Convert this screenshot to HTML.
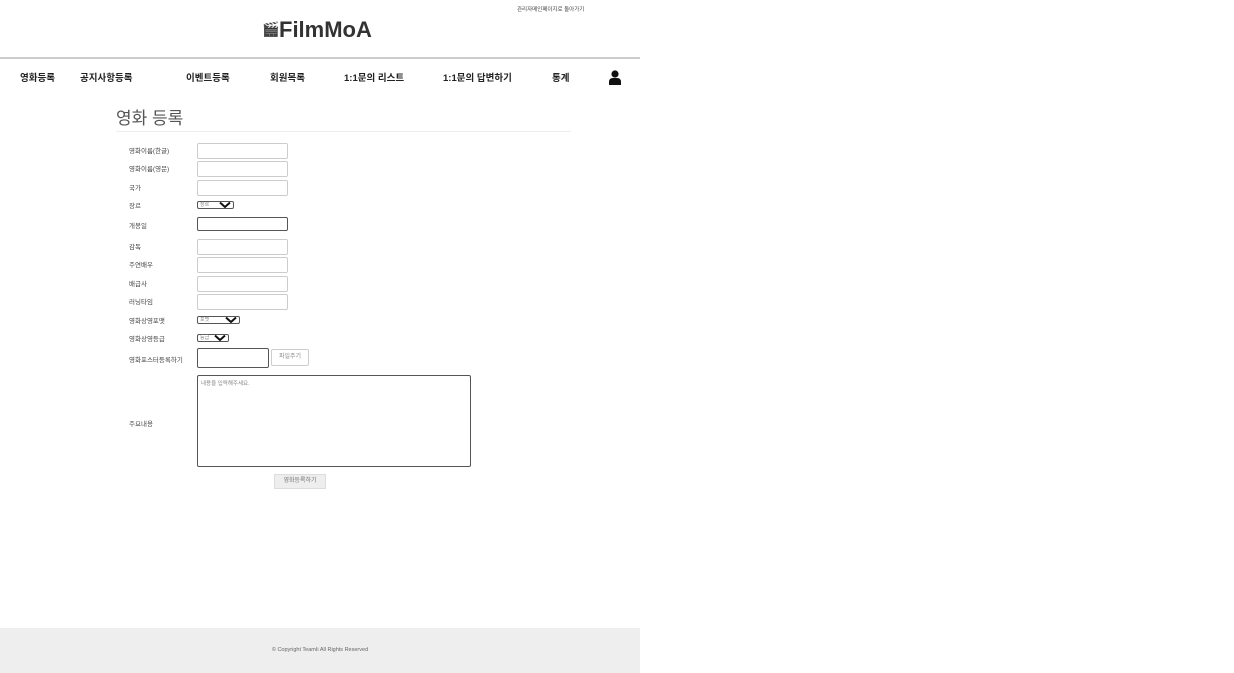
<!DOCTYPE html>
<html><head><meta charset="utf-8"><style>
*{margin:0;padding:0;box-sizing:border-box}
body{width:1234px;height:673px;background:#fff;position:relative;font-family:"Liberation Sans","Noto Sans CJK KR",sans-serif;color:#222;overflow:hidden}
.a{position:absolute}
.lbl{position:absolute;left:129px;font-size:6.5px;color:#444;transform:translateY(-50%)}
.in{position:absolute;left:197px;width:91px;height:16px;border:1px solid #ccc;border-radius:2px;background:#fff}
.sel{position:absolute;left:197px;height:8px;border:1px solid #555;border-radius:2px;font-size:5px;color:#888;padding-left:2px;line-height:6px}
.sel svg{position:absolute;right:2px;top:0}
.nav{position:absolute;top:77px;font-size:9.5px;font-weight:bold;color:#222;transform:translateY(-50%)}
</style></head><body>
<div class="a" style="left:517px;top:5px;font-size:5.5px;color:#444">관리자메인페이지로 돌아가기</div>
<div class="a" style="left:262px;top:21px;font-size:14px;filter:grayscale(1)">🎬</div>
<div class="a" style="left:279px;top:17px;font-size:22px;font-weight:bold;color:#333">FilmMoA</div>
<div class="a" style="left:0;top:57px;width:640px;height:2px;background:#ccc"></div>
<div class="nav" style="left:20px">영화등록</div>
<div class="nav" style="left:80px">공지사항등록</div>
<div class="nav" style="left:186px">이벤트등록</div>
<div class="nav" style="left:270px">회원목록</div>
<div class="nav" style="left:344px">1:1문의 리스트</div>
<div class="nav" style="left:443px">1:1문의 답변하기</div>
<div class="nav" style="left:552px">통계</div>
<svg class="a" style="left:609px;top:70px" width="12" height="15" viewBox="0 0 12 15"><circle cx="6" cy="4" r="3.6" fill="#111"/><path d="M0 15 V12 Q0 8 4 8 H8 Q12 8 12 12 V15Z" fill="#111"/></svg>
<div class="a" style="left:116px;top:104px;font-size:17px;color:#555">영화 등록</div>
<div class="a" style="left:116px;top:131px;width:455px;height:1px;background:#eee"></div>

<div class="lbl" style="top:150px">영화이름(한글)</div><div class="in" style="top:143px"></div>
<div class="lbl" style="top:168px">영화이름(영문)</div><div class="in" style="top:161px"></div>
<div class="lbl" style="top:187px">국가</div><div class="in" style="top:180px"></div>
<div class="lbl" style="top:205px">장르</div><div class="sel" style="top:201px;width:37px">장르<svg width="12" height="6" viewBox="0 0 12 6"><path d="M1 0.5 L6 5 L11 0.5" stroke="#111" stroke-width="2" fill="none"/></svg></div>
<div class="lbl" style="top:225px">개봉일</div><div class="in" style="top:217px;height:14px;border-color:#555"></div>
<div class="lbl" style="top:246px">감독</div><div class="in" style="top:239px"></div>
<div class="lbl" style="top:264px">주연배우</div><div class="in" style="top:257px"></div>
<div class="lbl" style="top:283px">배급사</div><div class="in" style="top:276px"></div>
<div class="lbl" style="top:301px">러닝타임</div><div class="in" style="top:294px"></div>
<div class="lbl" style="top:320px">영화상영포맷</div><div class="sel" style="top:316px;width:43px">포맷<svg width="12" height="6" viewBox="0 0 12 6"><path d="M1 0.5 L6 5 L11 0.5" stroke="#111" stroke-width="2" fill="none"/></svg></div>
<div class="lbl" style="top:338px">영화상영등급</div><div class="sel" style="top:334px;width:32px">등급<svg width="12" height="6" viewBox="0 0 12 6"><path d="M1 0.5 L6 5 L11 0.5" stroke="#111" stroke-width="2" fill="none"/></svg></div>
<div class="lbl" style="top:359px">영화포스터등록하기</div>
<div class="a" style="left:197px;top:348px;width:72px;height:20px;border:1px solid #555;border-radius:2px"></div>
<div class="a" style="left:271px;top:349px;width:38px;height:17px;border:1px solid #ccc;border-radius:2px;font-size:6px;color:#888;text-align:center;line-height:15px">파일주기</div>
<div class="lbl" style="top:423px">주요내용</div>
<div class="a" style="left:197px;top:375px;width:274px;height:92px;border:1px solid #555;border-radius:2px;font-size:5.5px;color:#888;padding:3px">내용을 입력해주세요.</div>
<div class="a" style="left:274px;top:474px;width:52px;height:15px;background:#eee;border:1px solid #ddd;font-size:6px;color:#777;text-align:center;line-height:13px">영화등록하기</div>
<div class="a" style="left:0;top:628px;width:640px;height:45px;background:#eee;font-size:5.5px;color:#666;text-align:center;line-height:45px">© Copyright TeamIi All Rights Reserved</div>
</body></html>
